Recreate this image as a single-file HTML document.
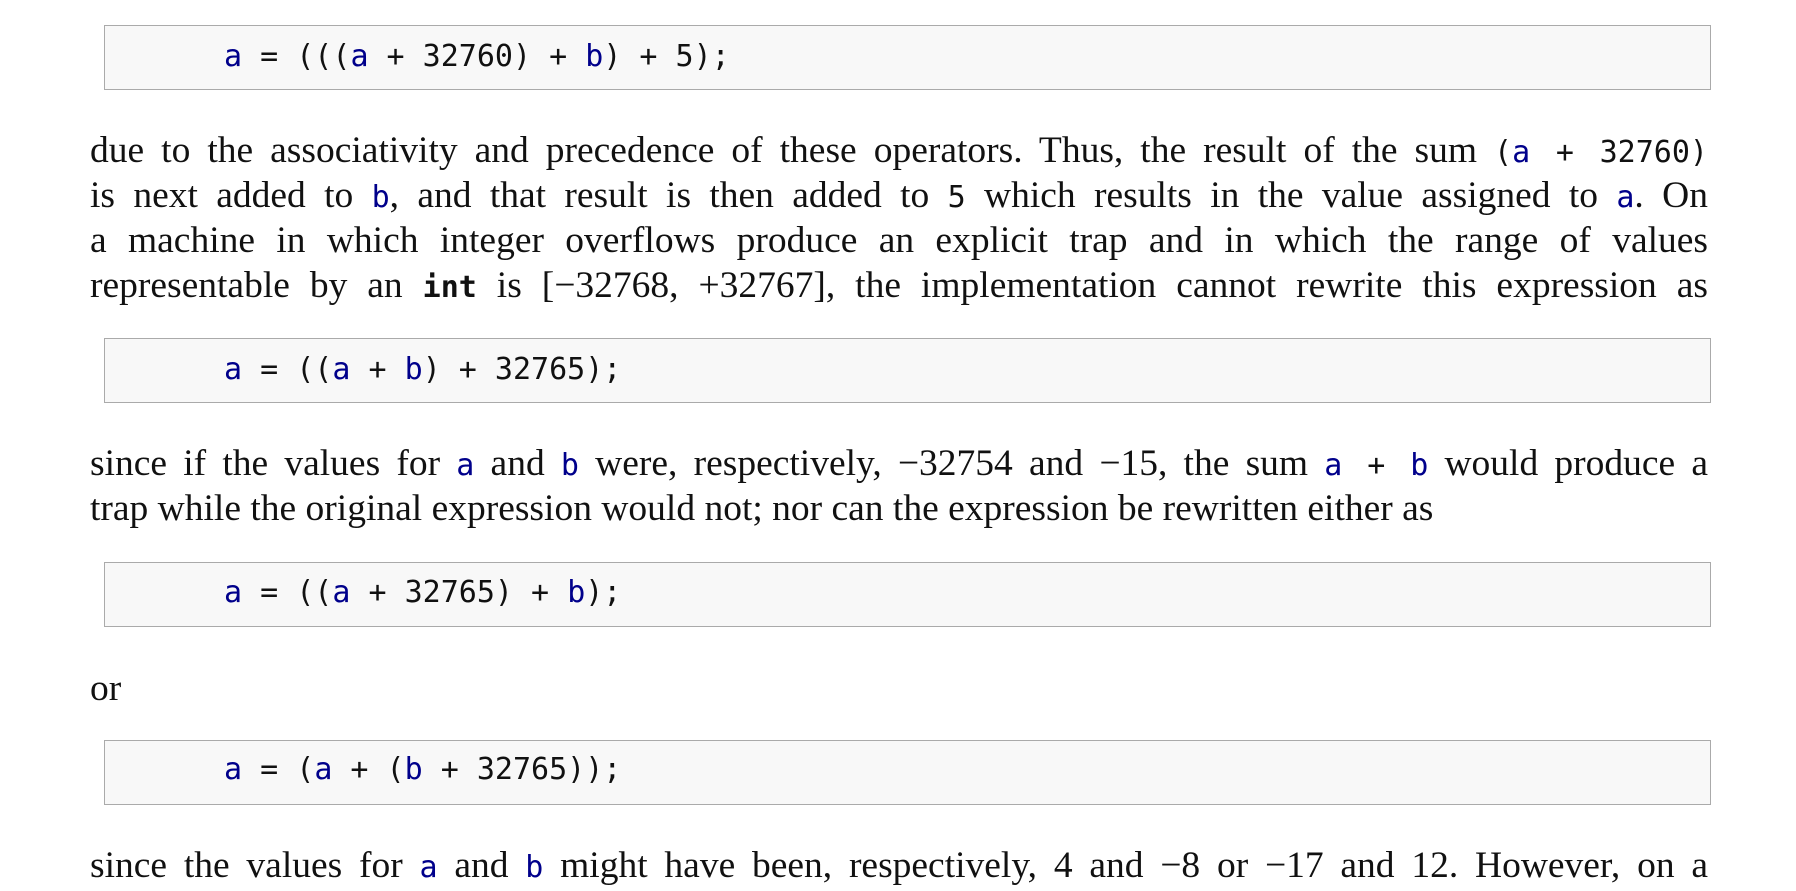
<!DOCTYPE html>
<html><head><meta charset="utf-8"><style>
body{margin:0;width:1796px;height:891px;background:#fff;position:relative;overflow:hidden}
.box{position:absolute;left:104px;width:1616px;background:#f8f8f8;border:1.5px solid #aaa;box-sizing:border-box}
.code{position:absolute;left:224px;font:30px/40px "DejaVu Sans Mono","Liberation Mono",monospace;color:#111;white-space:pre}
.v{color:#00008b}
.l{position:absolute;left:90px;width:1618px;font:37.5px/45px "Liberation Serif",serif;color:#111;white-space:nowrap}
.j{text-align:justify;text-align-last:justify;white-space:normal}
.m{font-family:"DejaVu Sans Mono","Liberation Mono",monospace;font-size:30px}
</style></head><body>
<div class="box" style="top:25px;height:65px;width:1607px"></div>
<div class="code" style="top:37px"><span class="v">a</span> = (((<span class="v">a</span> + 32760) + <span class="v">b</span>) + 5);</div>
<div class="l j" style="top:128px">due to the associativity and precedence of these operators. Thus, the result of the sum <span class="m">(<span class="v">a</span> + 32760)</span></div>
<div class="l j" style="top:173px">is next added to <span class="m v">b</span>, and that result is then added to <span class="m">5</span> which results in the value assigned to <span class="m v">a</span>. On</div>
<div class="l j" style="top:218px">a machine in which integer overflows produce an explicit trap and in which the range of values</div>
<div class="l j" style="top:263px">representable by an <b class="m">int</b> is [−32768, +32767], the implementation cannot rewrite this expression as</div>
<div class="box" style="top:338px;height:65px;width:1607px"></div>
<div class="code" style="top:350px"><span class="v">a</span> = ((<span class="v">a</span> + <span class="v">b</span>) + 32765);</div>
<div class="l j" style="top:441px">since if the values for <span class="m v">a</span> and <span class="m v">b</span> were, respectively, −32754 and −15, the sum <span class="m"><span class="v">a</span> + <span class="v">b</span></span> would produce a</div>
<div class="l" style="top:486px">trap while the original expression would not; nor can the expression be rewritten either as</div>
<div class="box" style="top:562px;height:65px;width:1607px"></div>
<div class="code" style="top:573px"><span class="v">a</span> = ((<span class="v">a</span> + 32765) + <span class="v">b</span>);</div>
<div class="l" style="top:666px">or</div>
<div class="box" style="top:740px;height:65px;width:1607px"></div>
<div class="code" style="top:750px"><span class="v">a</span> = (<span class="v">a</span> + (<span class="v">b</span> + 32765));</div>
<div class="l j" style="top:843px">since the values for <span class="m v">a</span> and <span class="m v">b</span> might have been, respectively, 4 and −8 or −17 and 12. However, on a</div>
</body></html>
